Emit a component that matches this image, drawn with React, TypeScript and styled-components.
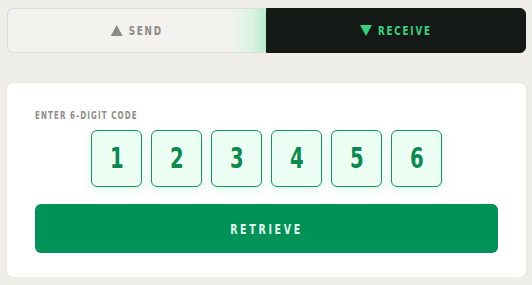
import styled, { createGlobalStyle } from 'styled-components';

const GlobalStyle = createGlobalStyle`
  body {
    margin: 0;
    background: #efeee9;
    font-family: "DejaVu Sans Condensed", "DejaVu Sans", "Liberation Sans", sans-serif;
    font-stretch: condensed;
  }
`;

const Page = styled.div`
  padding: 8px 6px 0 7px;
  display: flex;
  flex-direction: column;
  gap: 30px;
`;

const Tabs = styled.div`
  display: flex;
  height: 45px;
`;

const Tab = styled.button<{ active?: boolean }>`
  flex: 1;
  display: flex;
  align-items: center;
  justify-content: center;
  font-family: inherit;
  cursor: pointer;
  border: 1px solid ${(p) => (p.active ? '#151916' : '#dcdbd6')};
  border-right: ${(p) => (p.active ? '1px solid #151916' : 'none')};
  border-radius: ${(p) => (p.active ? '0 6px 6px 0' : '6px 0 0 6px')};
  background: ${(p) =>
    p.active
      ? '#151916'
      : 'linear-gradient(to right, #f3f2ee 0%, #f3f2ee 86%, #d9f3e2 95%, #b6ebcb 100%)'};
  color: ${(p) => (p.active ? '#34d17f' : '#8b8a86')};
  padding: 0;
`;

// condensed look: the installed fonts are wider than the original face
const Narrow = styled.span<{ scale?: number }>`
  display: inline-flex;
  align-items: center;
  transform: scaleX(${(p) => p.scale ?? 0.75});
`;

const TabText = styled(Narrow)`
  gap: 8px;
  font-size: 13px;
  font-weight: 700;
  letter-spacing: 2.4px;
`;

const Tri = styled.span<{ down?: boolean }>`
  width: 0;
  height: 0;
  border-left: 8px solid transparent;
  border-right: 8px solid transparent;
  ${(p) =>
    p.down ? 'border-top: 11px solid currentColor;' : 'border-bottom: 11px solid currentColor;'}
`;

const Card = styled.div`
  background: #ffffff;
  border-radius: 6px;
  box-shadow: 0 1px 4px rgba(0, 0, 0, 0.06);
  padding: 26px 28px 24px;
  display: flex;
  flex-direction: column;
`;

const Label = styled.div`
  font-size: 10.5px;
  font-weight: 700;
  letter-spacing: 1.5px;
  color: #8e8d89;
  line-height: 12px;
  transform: scaleX(0.75);
  transform-origin: left center;
`;

const Digits = styled.div`
  display: flex;
  justify-content: center;
  gap: 9px;
  margin-top: 9px;
`;

const Digit = styled.div`
  width: 51px;
  height: 57px;
  box-sizing: border-box;
  border: 1px solid #139561;
  border-radius: 6px;
  background: #ecfdf4;
  box-shadow: 0 3px 10px rgba(40, 190, 120, 0.16);
  display: flex;
  align-items: center;
  justify-content: center;
  font-size: 28px;
  font-weight: 700;
  color: #0b8a50;
`;

const Retrieve = styled.button`
  margin-top: 17px;
  height: 49px;
  border: none;
  border-radius: 6px;
  background: #009257;
  color: #e3f7ec;
  font-family: inherit;
  font-size: 14px;
  font-weight: 700;
  letter-spacing: 3.6px;
  cursor: pointer;
`;

export default function App() {
  const code = ['1', '2', '3', '4', '5', '6'];
  return (
    <>
      <GlobalStyle />
      <Page>
        <Tabs>
          <Tab>
            <TabText>
              <Tri />
              SEND
            </TabText>
          </Tab>
          <Tab active>
            <TabText>
              <Tri down />
              RECEIVE
            </TabText>
          </Tab>
        </Tabs>
        <Card>
          <Label>ENTER 6-DIGIT CODE</Label>
          <Digits>
            {code.map((d) => (
              <Digit key={d}>
                <Narrow scale={0.78}>{d}</Narrow>
              </Digit>
            ))}
          </Digits>
          <Retrieve>
            <Narrow>RETRIEVE</Narrow>
          </Retrieve>
        </Card>
      </Page>
    </>
  );
}
